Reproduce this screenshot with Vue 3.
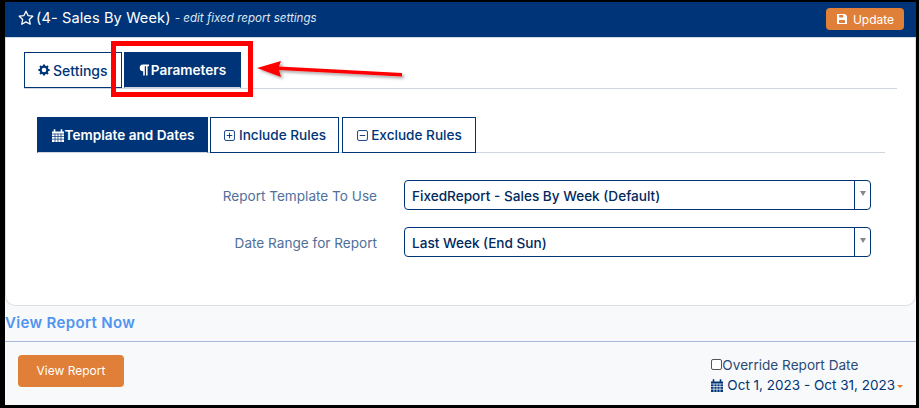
<script setup>
const selects = [
  { label: 'Report Template To Use', value: 'FixedReport - Sales By Week (Default)' },
  { label: 'Date Range for Report', value: 'Last Week (End Sun)' },
]
</script>

<template>
  <div class="frame">
    <section class="card">
      <header class="head">
        <svg class="star" viewBox="0 0 16 16"><path d="M8 1.2l2.05 4.4 4.75.6-3.5 3.25.95 4.75L8 11.85 3.75 14.2l.95-4.75L1.2 6.2l4.75-.6z" fill="none" stroke="#fff" stroke-width="1.3" stroke-linejoin="round"/></svg>
        <span class="title">(4- Sales By Week)</span>
        <em class="sub">- edit fixed report settings</em>
        <button class="update">
          <svg viewBox="0 0 12 12" class="save"><path d="M1 1h8l2 2v8H1z" fill="#fff"/><path d="M3.2 2h4v2.4h-4zM3 7h6v3H3z" fill="#e08038"/></svg>
          Update
        </button>
      </header>

      <div class="body">
        <nav class="tabs top">
          <a class="tab">
            <svg viewBox="0 0 12 12" class="ico"><circle cx="6" cy="6" r="3.4" fill="none" stroke="#003478" stroke-width="2.2"/><path d="M6 .4v2.2M6 9.4v2.2M.4 6h2.2M9.4 6h2.2M2 2l1.6 1.6M8.4 8.4L10 10M2 10l1.6-1.6M8.4 3.6L10 2" stroke="#003478" stroke-width="2"/></svg>
            Settings
          </a>
          <a class="tab active">
            <svg viewBox="0 0 10 12" class="ico para"><path d="M4 .5h6v1.7H8.6v9.3H7V2.2H5.8v9.3H4.2V7.2A3.35 3.35 0 0 1 4 .5z" fill="#fff"/></svg>
            Parameters
          </a>
        </nav>

        <nav class="tabs inner">
          <a class="tab active wide">
            <svg viewBox="0 0 14 14" class="cal"><path d="M1 3h12v10.5H1z" fill="#fff"/><path d="M3.5.8v2.6M10.5.8v2.6" stroke="#fff" stroke-width="1.6"/><path d="M1 5.5h12M1 8h12M1 10.7h12M4 5v8.5M7 5v8.5M10 5v8.5" stroke="#003478" stroke-width=".7"/></svg>
            <span>Template and Dates</span>
          </a>
          <a class="tab rule">
            <svg viewBox="0 0 12 12" class="box"><rect x=".6" y=".6" width="10.8" height="10.8" rx="1.5" fill="none" stroke="#003478" stroke-width="1"/><path d="M3 6h6M6 3v6" stroke="#003478"/></svg>
            Include Rules
          </a>
          <a class="tab rule ex">
            <svg viewBox="0 0 12 12" class="box"><rect x=".6" y=".6" width="10.8" height="10.8" rx="1.5" fill="none" stroke="#003478" stroke-width="1"/><path d="M3 6h6" stroke="#003478"/></svg>
            Exclude Rules
          </a>
        </nav>

        <div class="form">
          <div v-for="s in selects" :key="s.label" class="row">
            <label>{{ s.label }}</label>
            <div class="select">
              <span class="val">{{ s.value }}</span>
              <span class="caret"><i></i></span>
            </div>
          </div>
        </div>
      </div>
    </section>

    <a class="now">View Report Now</a>
    <hr class="rule-line" />

    <footer class="foot">
      <button class="view">View Report</button>
      <div class="range">
        <label class="override"><input type="checkbox" />Override Report Date</label>
        <div class="dates">
          <svg viewBox="0 0 14 14" class="cal dark"><path d="M1 3h12v10.5H1z" fill="#003478"/><path d="M3.5.8v2.6M10.5.8v2.6" stroke="#003478" stroke-width="1.6"/><path d="M1 5.5h12M1 8h12M1 10.7h12M4 5v8.5M7 5v8.5M10 5v8.5" stroke="#fff" stroke-width=".7"/></svg>
          <span>Oct 1, 2023 - Oct 31, 2023</span><i class="drop"></i>
        </div>
      </div>
    </footer>

    <div class="mark"></div>
    <svg class="arrow" width="160" height="30" viewBox="0 0 160 30">
      <defs><filter id="sh" x="-10%" y="-50%" width="120%" height="200%"><feDropShadow dx="2" dy="2" stdDeviation="1.5" flood-color="#000" flood-opacity=".35"/></filter></defs>
      <g filter="url(#sh)" fill="#f00">
        <path d="M1 11L25 4l-2 5.5 123 6.5v3.5L23 13l2 7z"/>
      </g>
    </svg>
  </div>
</template>

<style>
html, body { margin: 0; }
</style>

<style scoped>
.frame {
  position: relative;
  box-sizing: border-box;
  width: 919px;
  height: 408px;
  overflow: hidden;
  border-style: solid;
  border-color: #000;
  border-width: 2px 3px 3px 5px;
  background: #f8f9fa;
  font-family: Inter, "Liberation Sans", sans-serif;
  color: #003478;
}
.card {
  height: 304px;
  box-sizing: border-box;
  background: #fff;
  border: 1px solid #dcdfe3;
  border-top: 0;
  border-radius: 0 0 10px 10px;
}
.head {
  height: 35px;
  margin: 0 -1px;
  padding: 0 12px 0 13px;
  display: flex;
  align-items: center;
  background: #003478;
  color: #fff;
  border-bottom: 1px solid #d4dae3;
  box-sizing: content-box;
}
.star { width: 16px; height: 16px; margin: 0 2px 3px 0; flex: none; }
.title { font-size: 14.6px; letter-spacing: .1px; margin-bottom: 4px; }
.sub { font-size: 11.6px; margin: 0 0 3px 4px; color: #dfe7f2; }
.update {
  margin: 0 0 1px auto;
  height: 22px;
  width: 78px;
  padding: 0;
  border: 0;
  border-radius: 4px;
  background: #e08038;
  color: #fff;
  font: 12px Inter, sans-serif;
  display: flex;
  align-items: center;
  justify-content: center;
  gap: 5px;
}
.save { width: 12px; height: 12px; }
.body { padding: 14px 19px 0 18px; }
.tabs { display: flex; gap: 2px; }
.tabs.top {
  width: 873px;
  height: 36px;
  border-bottom: 1px solid #cfd6e0;
}
.tabs.inner {
  margin: 28px 11px 0 13px;
  gap: 2px;
  height: 35px;
  width: 848px;
  border-bottom: 1px solid #cfd6e0;
}
.tab {
  box-sizing: border-box;
  height: 36px;
  padding: 0 14px;
  display: flex;
  align-items: center;
  gap: 3px;
  border: 1px solid #003478;
  background: #fff;
  color: #003478;
  font-size: 13.6px;
  font-weight: 500;
  white-space: nowrap;
}
.tab.active { background: #003478; color: #fff; font-weight: 600; border-color: #003478; border-bottom-color: #cfd6e0; }
.tabs.top .tab:first-child { width: 98px; padding: 0 0 0 13px; font-size: 14px; }
.tabs.top .tab.active { width: 117px; padding: 0; justify-content: center; gap: 2px; }
.tabs.inner .tab { height: 36px; }
.tab.wide { width: 171px; padding: 0; justify-content: center; gap: 0; }
.tab.rule { width: 129px; padding: 0 0 0 1px; justify-content: center; font-weight: 500; gap: 4px; }
.tab.ex { width: 134px; margin-left: 1px; gap: 3px; }
.ico { width: 12px; height: 12px; flex: none; }
.para { width: 10px; }
.cal { width: 14px; height: 15px; flex: none; }
.box { width: 11px; height: 11px; flex: none; }
.form { margin-top: 27px; display: flex; flex-direction: column; gap: 17px; }
.row { display: flex; align-items: center; height: 30px; }
.row label {
  width: 353px;
  margin-right: 27px;
  padding-top: 2px;
  text-align: right;
  font-size: 13.6px;
  color: #50709a;
}
.select {
  box-sizing: border-box;
  width: 467px;
  height: 30px;
  border: 1px solid #003478;
  border-radius: 4px;
  display: flex;
  align-items: center;
  font-size: 13.6px;
  font-weight: 500;
  color: #00295e;
}
.val { flex: 1; padding: 2px 0 0 7px; }
.caret {
  width: 15px;
  height: 100%;
  border-left: 1px solid #003478;
  display: flex;
  align-items: center;
  justify-content: center;
}
.caret i {
  width: 0; height: 0;
  border: 3.5px solid transparent;
  border-top: 5px solid #808890;
  border-bottom: 0;
  margin-top: -4px;
}
.now {
  display: block;
  margin-top: 8px;
  font-size: 15px;
  font-weight: 600;
  letter-spacing: .35px;
  line-height: 17px;
  color: #4f94f0;
}
.rule-line { margin: 10px 0 0; border: 0; border-top: 1px solid #a9b8d6; }
.foot {
  display: flex;
  justify-content: space-between;
  padding: 13px 13px 0 13px;
}
.view {
  width: 106px;
  height: 32px;
  padding: 0 0 2px;
  border: 0;
  border-radius: 4px;
  background: #e08038;
  color: #fff;
  font: 12px Inter, sans-serif;
}
.range { margin-top: 1px; font-size: 13.6px; color: #2b4a77; }
.override { display: flex; align-items: center; height: 17px; margin-left: 1px; }
.override input { appearance: none; width: 11px; height: 11px; margin: 0; border: 1px solid #555; border-radius: 2px; background: #fff; }
.dates { display: flex; align-items: center; height: 20px; margin-top: 2px; color: #003478; gap: 3px; font-size: 13.5px; }
.drop { width: 0; height: 0; border: 3.5px solid transparent; border-top: 3.5px solid #e8792a; border-bottom: 0; margin-left: -1px; margin-top: 3px; }
.mark {
  position: absolute;
  left: 106px;
  top: 39px;
  width: 142px;
  height: 56px;
  box-sizing: border-box;
  border: 5px solid #f00;
}
.arrow { position: absolute; left: 251px; top: 55px; }
</style>
